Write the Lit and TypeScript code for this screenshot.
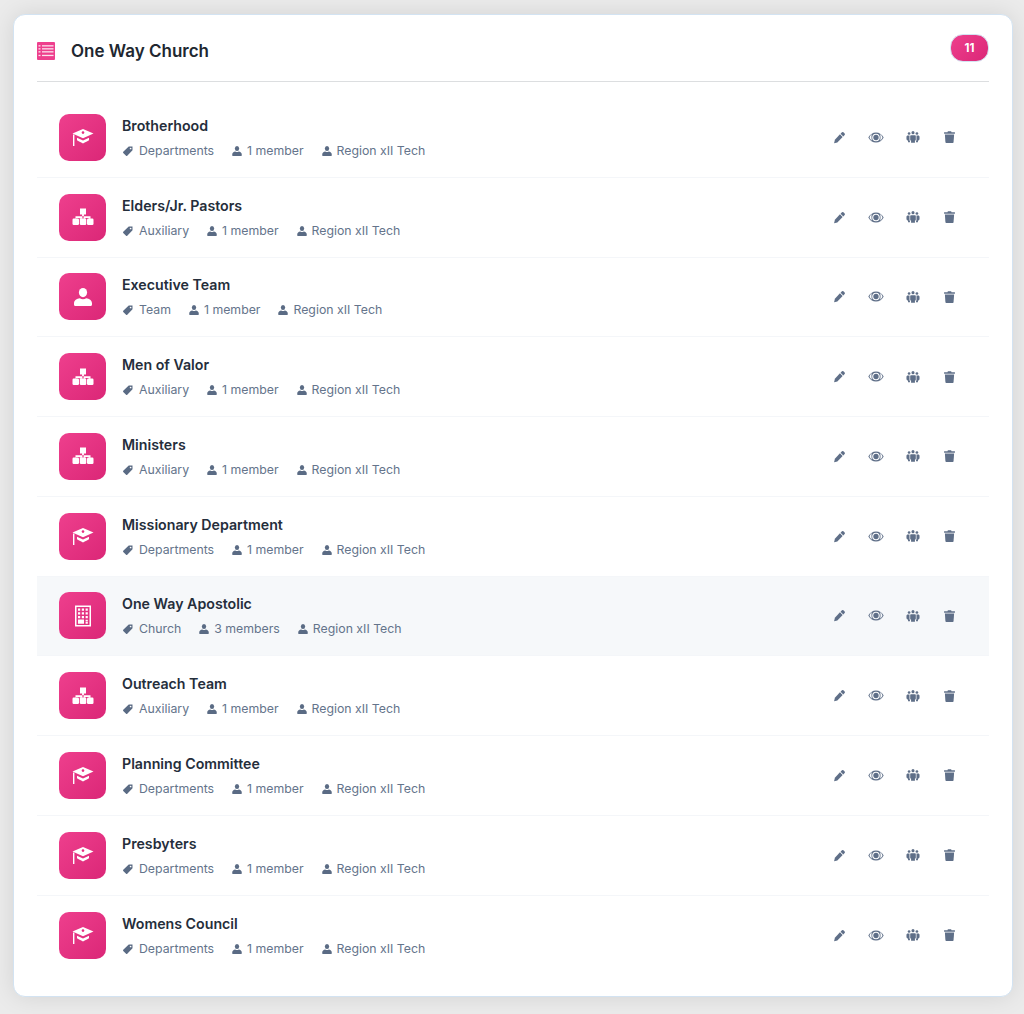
import { LitElement, css, html, svg } from "lit";
import { customElement } from "lit/decorators.js";

type Kind = "cap" | "org" | "user" | "building";

type Row = {
  name: string;
  kind: Kind;
  category: string;
  members: string;
  active?: boolean;
};

const rows: Row[] = [
  { name: "Brotherhood", kind: "cap", category: "Departments", members: "1 member" },
  { name: "Elders/Jr. Pastors", kind: "org", category: "Auxiliary", members: "1 member" },
  { name: "Executive Team", kind: "user", category: "Team", members: "1 member" },
  { name: "Men of Valor", kind: "org", category: "Auxiliary", members: "1 member" },
  { name: "Ministers", kind: "org", category: "Auxiliary", members: "1 member" },
  { name: "Missionary Department", kind: "cap", category: "Departments", members: "1 member" },
  { name: "One Way Apostolic", kind: "building", category: "Church", members: "3 members", active: true },
  { name: "Outreach Team", kind: "org", category: "Auxiliary", members: "1 member" },
  { name: "Planning Committee", kind: "cap", category: "Departments", members: "1 member" },
  { name: "Presbyters", kind: "cap", category: "Departments", members: "1 member" },
  { name: "Womens Council", kind: "cap", category: "Departments", members: "1 member" },
];

// all glyphs are drawn on a 24x24 box
const glyphs: Record<Kind, unknown> = {
  cap: svg`
    <path d="M12 4 1.5 8.6 12 13.2l10.500-4.600L12 4z"/>
    <circle cx="12" cy="7.600" r="1.300" fill="#e62e80"/>
    <path d="M2 9.500h1.400V21H2z"/>
    <path d="M6 12.800l6 2.700 6-2.700v2.400c-1.500 1.500-3.600 1.300-6 3.300-2.400-2-4.500-1.800-6-3.300z"/>`,
  org: svg`
    <path d="M9 3.500h6v6h-2.100v1.700h6.600v2.600h-1.700v-.9h-3.500v.9h-1.700v-2.900h-1.200v2.900H8.700v-.9H5.200v.9H4.500v-2.600h6.600V9.500H9z"/>
    <rect x="1.500" y="13.500" width="6.500" height="6.500" rx="1.200"/>
    <rect x="8.800" y="13.500" width="6.500" height="6.500" rx="1.200"/>
    <rect x="16" y="13.500" width="6.500" height="6.500" rx="1.200"/>`,
  user: svg`
    <ellipse cx="12" cy="7.600" rx="4.100" ry="4.600"/>
    <path d="M8.800 13.200c1.900 1.300 4.500 1.300 6.400 0 3 .6 5.800 2 5.800 5v1.300c0 1-.8 1.500-1.800 1.500H4.800c-1 0-1.800-.5-1.800-1.500v-1.300c0-3 2.800-4.400 5.800-5z"/>`,
  building: svg`
    <path fill-rule="evenodd" d="M4 1.500h16v21H4zM5.500 3v18h13V3zM7 4.500h2.200v2.200H7zm3.800 0H13v2.200h-2.200zm3.800 0h2.200v2.200h-2.200zM7 8.300h2.200v2.200H7zm3.800 0H13v2.200h-2.200zm3.800 0h2.200v2.200h-2.200zM7 12.100h2.200v2.200H7zm3.800 0H13v2.200h-2.200zm3.800 0h2.200v2.200h-2.200zM7 15.400h6v4.400H7zm7.600.3h2.200v1.700h-2.200zm0 2.400h2.200v1.700h-2.200z"/>`,
};

const tagIcon = html`<svg class="tag" viewBox="0 0 24 24" fill="currentColor">
  <path fill-rule="evenodd" d="M13.500 3H21v7.500L10.500 21.500c-.7.700-1.700.7-2.400 0L2.500 15.900c-.7-.7-.7-1.700 0-2.400L13.500 3zm3.700 2.300a1.700 1.700 0 1 0 0 3.400 1.700 1.700 0 0 0 0-3.400z"/>
</svg>`;

const personIcon = html`<svg class="person" viewBox="0 0 24 24" fill="currentColor">
  <ellipse cx="12" cy="7" rx="4.300" ry="5"/>
  <path d="M8.500 13c2 1.400 5 1.400 7 0 3.400.6 6 2.300 6 5.500V21c0 .6-.4 1-1 1h-17c-.6 0-1-.4-1-1v-2.500c0-3.200 2.600-4.900 6-5.500z"/>
</svg>`;

const listIcon = html`<svg class="list-icon" viewBox="0 0 18 18">
  <rect width="18" height="18" rx="1" fill="#ee3f8d"/>
  <g fill="#fff" opacity=".85">
    <rect x="1.500" y="3.200" width="2" height="1.300"/>
    <rect x="5" y="3.200" width="11.500" height="1.300"/>
    <rect x="1.500" y="6.200" width="2" height="1.300"/>
    <rect x="5" y="6.200" width="11.500" height="1.300"/>
    <rect x="1.500" y="9.200" width="2" height="1.300"/>
    <rect x="5" y="9.200" width="11.500" height="1.300"/>
    <rect x="1.500" y="12.800" width="2" height="1.300"/>
    <rect x="5" y="12.800" width="11.500" height="1.300"/>
  </g>
</svg>`;

const actions = html`
  <svg class="act pencil" viewBox="0 0 24 24" fill="currentColor">
    <path d="M16.500 2.500a2 2 0 0 1 2.800 0l2.200 2.200a2 2 0 0 1 0 2.800L19 10l-5-5z"/>
    <path d="M12.800 6.200l5 5L8 21l-6 1.500L3.500 16l9.300-9.800z"/>
  </svg>
  <svg class="act eye" viewBox="0 0 24 16" fill="currentColor">
    <path fill-rule="evenodd" d="M12 .5C7 .5 2.700 3.500.5 8c2.200 4.500 6.500 7.500 11.500 7.500S21.300 12.500 23.500 8C21.300 3.500 17 .5 12 .5zM5.900 3.300A7 7 0 0 0 5.200 8c0 1.700.3 3.300.7 4.700C4.200 11.700 3 10 2.300 8c.7-2 1.900-3.700 3.600-4.700zm12.200 0c1.700 1 2.900 2.700 3.600 4.700-.7 2-1.900 3.700-3.600 4.700.4-1.400.7-3 .7-4.700s-.3-3.300-.7-4.700zM12 2.300a5.700 5.700 0 1 1 0 11.400 5.700 5.700 0 0 1 0-11.400z"/>
    <circle cx="12" cy="8" r="4"/>
  </svg>
  <svg class="act users" viewBox="0 0 24 24" fill="currentColor">
    <circle cx="12" cy="4.500" r="2.600"/>
    <circle cx="5.300" cy="6" r="2.300"/>
    <circle cx="18.700" cy="6" r="2.300"/>
    <path d="M8.500 9h7c.8 0 1.300.6 1.300 1.300v6.200c0 1-.6 1.600-1.500 1.700V22H8.700v-3.800c-.9-.1-1.500-.7-1.500-1.700v-6.200C7.200 9.600 7.700 9 8.500 9z"/>
    <path d="M3 9.500h3v7.800c0 .8.300 1.400.8 1.800V21H3.500v-3C2 17.700.8 16.800.8 15.300v-3.500C.8 10.500 1.800 9.500 3 9.500z"/>
    <path d="M21 9.500h-3v7.800c0 .8-.3 1.400-.8 1.800V21h3.300v-3c1.500-.3 2.700-1.200 2.700-2.700v-3.500c0-1.300-1-2.300-2.200-2.300z"/>
  </svg>
  <svg class="act trash" viewBox="0 0 24 24" fill="currentColor">
    <path d="M9 1.500h6l.7 1.500H22v3H2V3h6.300z"/>
    <path d="M3.500 7.500h17l-1 14.200c-.1.800-.7 1.300-1.500 1.300H6c-.8 0-1.400-.5-1.500-1.300z"/>
  </svg>
`;

@customElement("app-root")
export class AppRoot extends LitElement {
  static styles = css`
    :host {
      display: block;
      height: 1014px;
      box-sizing: border-box;
      padding: 14px 11px 17px 13px;
      background: #ebebeb;
      font-family: Inter, "Liberation Sans", sans-serif;
      overflow: hidden;
    }
    .card {
      box-sizing: border-box;
      height: 983px;
      padding: 0 23px;
      background: #fff;
      border: 1px solid #d3e3f2;
      border-radius: 12px;
      box-shadow: 0 0 24px rgba(0, 0, 0, 0.1);
    }
    .head {
      display: flex;
      align-items: center;
      box-sizing: border-box;
      height: 67px;
      padding-top: 6px;
      border-bottom: 1px solid #dcdee0;
    }
    .list-icon {
      width: 18px;
      height: 18px;
      margin-right: 16px;
    }
    h1 {
      flex: 1;
      margin: 0;
      font-size: 17px;
      font-weight: 600;
      color: #212730;
    }
    .badge {
      width: 37px;
      height: 26px;
      margin-top: -6px;
      border: 1px solid #d3e3f2;
      border-radius: 13px;
      background: linear-gradient(135deg, #ee3f8d, #db2777);
      color: #fff;
      font-size: 11.500px;
      font-weight: 700;
      line-height: 26px;
      text-align: center;
    }
    .rows {
      padding-top: 16px;
    }
    .row {
      display: flex;
      align-items: center;
      box-sizing: border-box;
      height: 79.750px;
      padding: 0 33px 0 22px;
      border-bottom: 1px solid #f4f6f9;
    }
    .row:last-child {
      border-bottom: none;
    }
    .row.active {
      background: #f6f8fa;
    }
    .thumb {
      display: flex;
      align-items: center;
      justify-content: center;
      flex: none;
      width: 47px;
      height: 47px;
      margin-right: 16px;
      border-radius: 10px;
      background: linear-gradient(135deg, #ee3f8d, #db2777);
    }
    .thumb svg {
      width: 24px;
      height: 24px;
      fill: #fff;
    }
    .info {
      flex: 1;
    }
    .name {
      margin-bottom: 7px;
      font-size: 14.200px;
      font-weight: 600;
      line-height: 20px;
      color: #252e3b;
    }
    .meta {
      display: flex;
      align-items: center;
      gap: 17px;
      font-size: 12.300px;
      line-height: 16px;
      color: #64748b;
    }
    .meta span {
      display: flex;
      align-items: center;
    }
    .tag {
      width: 12px;
      height: 12px;
      margin-right: 5px;
      color: #5a6b84;
    }
    .person {
      width: 12px;
      height: 12px;
      margin-right: 4px;
      color: #5a6b84;
    }
    .actions {
      display: flex;
      align-items: center;
      color: #5f6f88;
    }
    .act {
      flex: none;
    }
    .pencil {
      width: 13px;
      height: 13px;
      margin-right: 22px;
    }
    .eye {
      width: 16px;
      height: 11px;
      margin-right: 22px;
    }
    .users {
      width: 14px;
      height: 14px;
      margin-right: 23px;
    }
    .trash {
      width: 13px;
      height: 14px;
    }
  `;

  render() {
    return html`
      <div class="card">
        <div class="head">
          ${listIcon}
          <h1>One Way Church</h1>
          <div class="badge">11</div>
        </div>
        <div class="rows">
          ${rows.map(
            (r) => html`
              <div class="row ${r.active ? "active" : ""}">
                <div class="thumb">
                  <svg viewBox="0 0 24 24">${glyphs[r.kind]}</svg>
                </div>
                <div class="info">
                  <div class="name">${r.name}</div>
                  <div class="meta">
                    <span>${tagIcon}${r.category}</span>
                    <span>${personIcon}${r.members}</span>
                    <span>${personIcon}Region xII Tech</span>
                  </div>
                </div>
                <div class="actions">${actions}</div>
              </div>
            `,
          )}
        </div>
      </div>
    `;
  }
}
